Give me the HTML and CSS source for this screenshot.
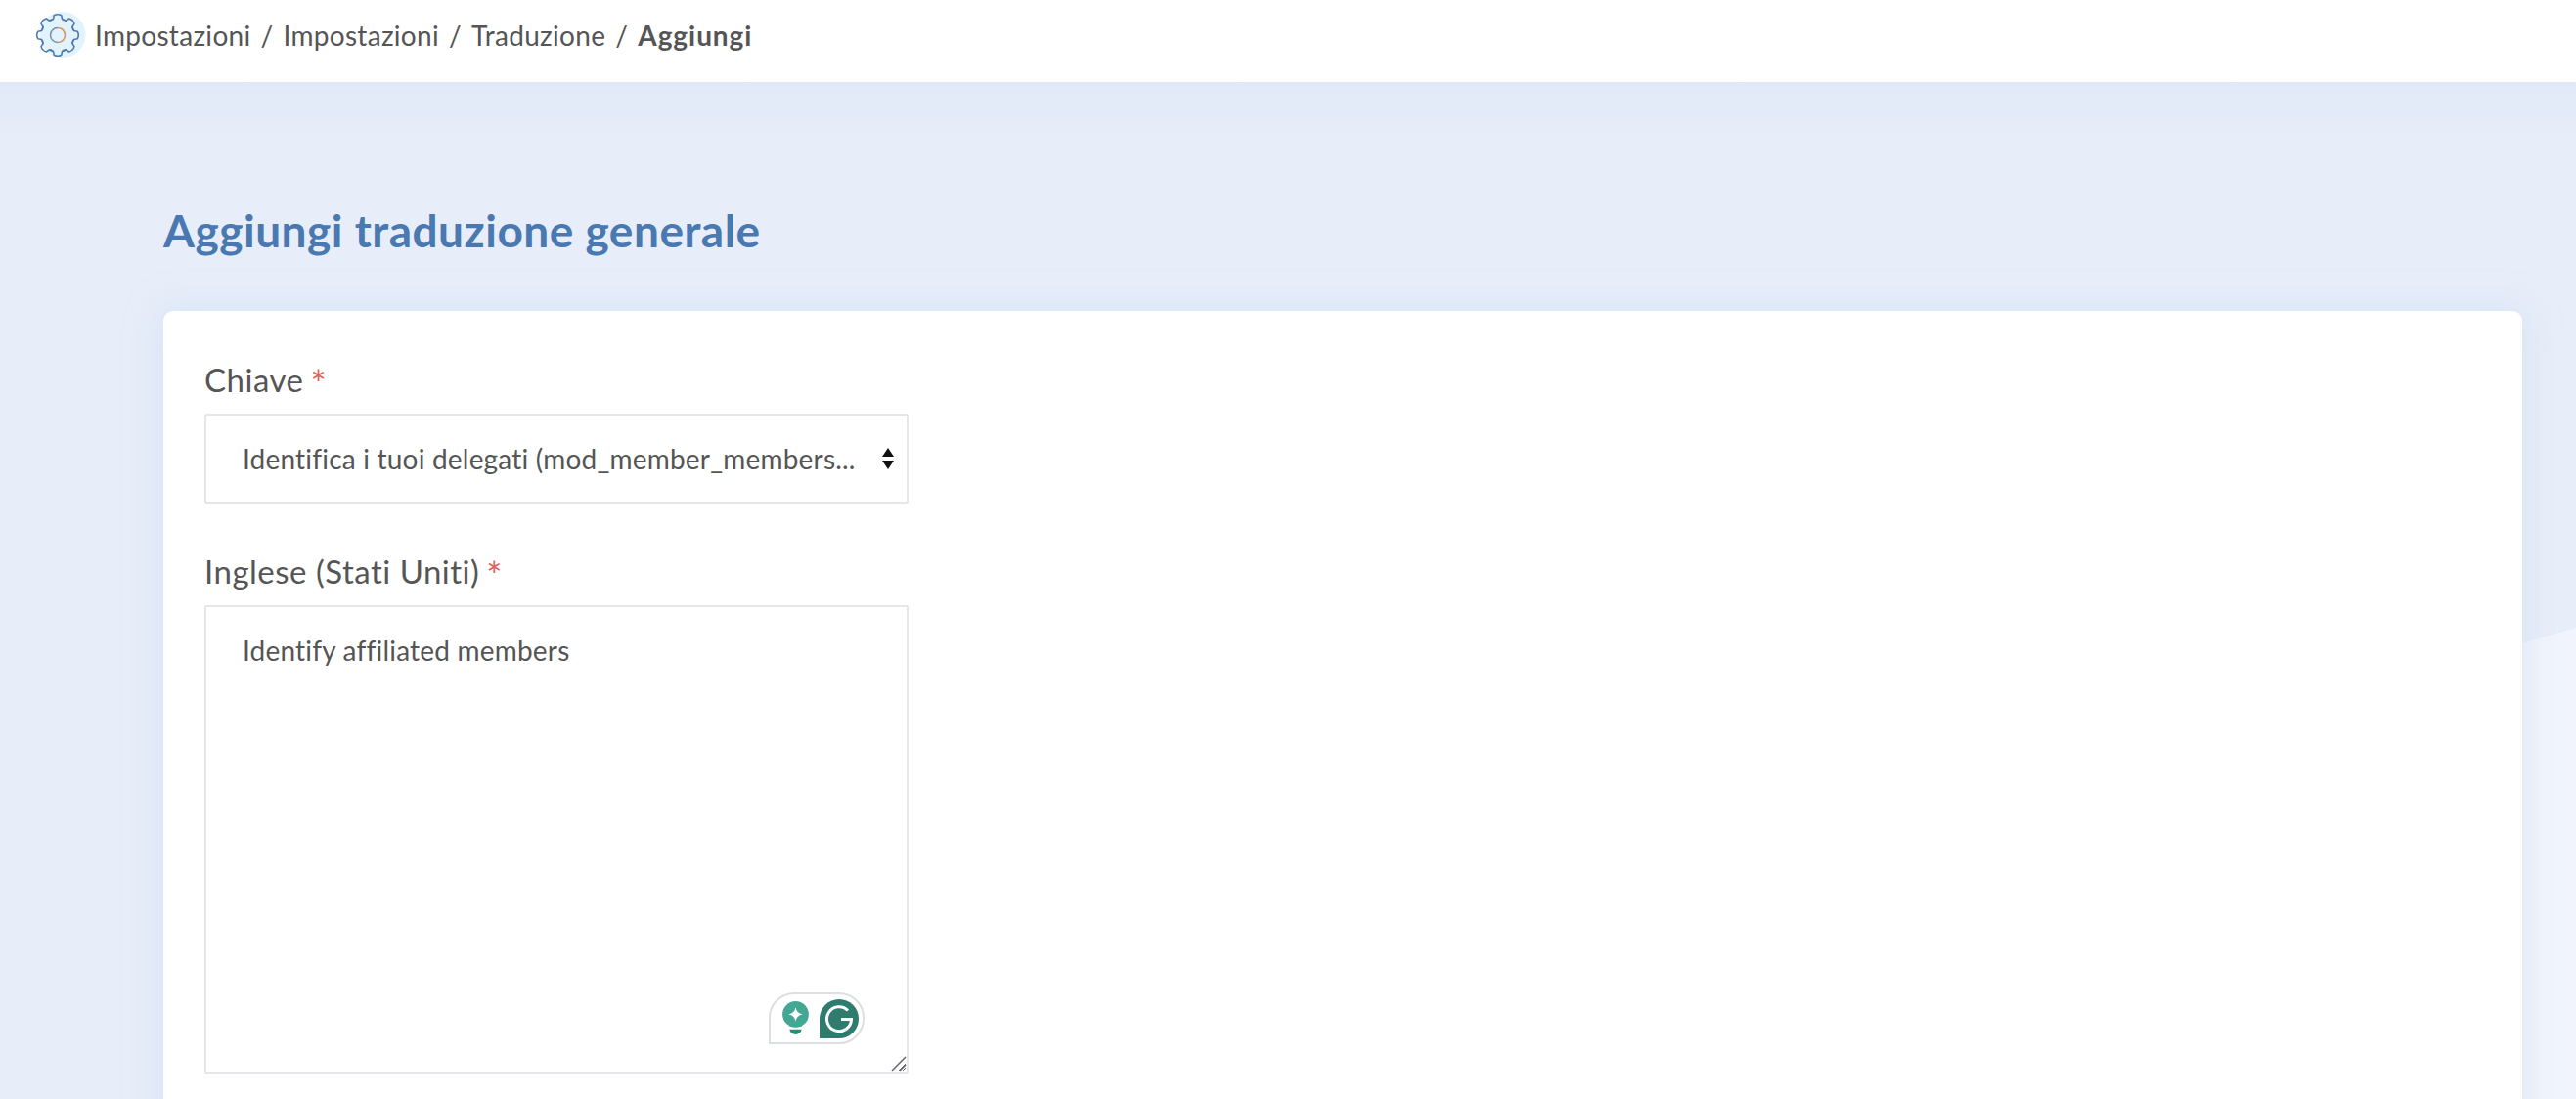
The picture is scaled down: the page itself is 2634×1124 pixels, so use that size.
FILE: index.html
```html
<!DOCTYPE html>
<html lang="it">
<head>
<meta charset="utf-8">
<title>Aggiungi traduzione generale</title>
<link rel="stylesheet" href="styles.css">
</head>
<body>
<header class="topbar">
  <svg class="gear" viewBox="0 0 54 48" width="54" height="48" aria-hidden="true">
    <circle cx="29" cy="23.500" r="23.500" fill="#e2f3fb"/>
    <defs><path id="sector" d="M15.900 8.900 Q18 8.600 19.500 7.400 L20.200 3.800 Q24 1.600 27.800 3.800 L28.500 7.400 Q30 8.600 32.100 8.900"/></defs>
    <g fill="none" stroke="#4b7bb0" stroke-width="1.600" stroke-linejoin="round" stroke-linecap="round">
      <use href="#sector"/>
      <use href="#sector" transform="rotate(45 24 24)"/>
      <use href="#sector" transform="rotate(90 24 24)"/>
      <use href="#sector" transform="rotate(135 24 24)"/>
      <use href="#sector" transform="rotate(180 24 24)"/>
      <use href="#sector" transform="rotate(225 24 24)"/>
      <use href="#sector" transform="rotate(270 24 24)"/>
      <use href="#sector" transform="rotate(315 24 24)"/>
    </g>
    <path d="M24 31.500 A7.500 7.500 0 0 1 24 16.500" fill="none" stroke="#6f8fb5" stroke-width="1.500"/>
    <path d="M24 16.500 A7.500 7.500 0 0 1 24 31.500" fill="none" stroke="#d99a66" stroke-width="1.700"/>
  </svg>
  <nav class="crumbs">
    <span>Impostazioni</span><span class="sep">/</span><span>Impostazioni</span><span class="sep">/</span><span>Traduzione</span><span class="sep">/</span><strong>Aggiungi</strong>
  </nav>
</header>
<main class="content">
  <h1 class="title">Aggiungi traduzione generale</h1>
  <section class="card">
    <div class="field">
      <label class="label" for="key">Chiave<span class="req">*</span></label>
      <div class="select-wrap">
        <select id="key" class="select"><option>Identifica i tuoi delegati (mod_member_members...</option></select>
        <svg class="arrows" viewBox="0 0 14 24" width="14" height="24" aria-hidden="true"><path d="M7 1 L13 10 H1 Z M1 14 H13 L7 23 Z" fill="#111"/></svg>
      </div>
    </div>
    <div class="field">
      <label class="label" for="en">Inglese (Stati Uniti)<span class="req">*</span></label>
      <div class="area-wrap">
        <textarea id="en" class="area">Identify affiliated members</textarea>
        <div class="grammarly" aria-hidden="true">
          <svg viewBox="0 0 28 34" width="29" height="35">
            <circle cx="14" cy="13" r="13" fill="#43a893"/>
            <path d="M8 22 H20 V25 H8 Z" fill="#43a893"/>
            <path d="M8 28 H20 Q19 33 14 33 Q9 33 8 28 Z" fill="#2f8a78"/>
            <path d="M14 6 Q15 12 21 13 Q15 14 14 20 Q13 14 7 13 Q13 12 14 6 Z" fill="#fff"/>
          </svg>
          <svg viewBox="0 0 40 40" width="40" height="40">
            <path d="M0 20 A20 20 0 1 1 20 40 H0 Z" fill="#2f7c6e"/>
            <path d="M29 11.500 A12.500 12.500 0 1 0 32.500 20.500 H22" fill="none" stroke="#fff" stroke-width="3"/>
          </svg>
        </div>
        <svg class="grip" viewBox="0 0 16 16" width="16" height="16" aria-hidden="true">
          <path d="M1 15 L15 1 M9 15 L15 9" stroke="#666" stroke-width="1.500" fill="none"/>
        </svg>
      </div>
    </div>
  </section>
</main>
</body>
</html>
```
FILE: styles.css
```css
* { box-sizing: border-box; }
html, body { height: 100%; }
body {
  margin: 0;
  height: 1124px;
  overflow: hidden;
  font-family: "Lato", "Open Sans", sans-serif;
  color: #555;
  background-color: #e7eef9;
  background-image:
    linear-gradient(to bottom right, transparent 50%, #f1f4fc 50%),
    linear-gradient(to bottom, #e1e8f7 0, #e7eef9 60px);
  background-repeat: no-repeat;
  background-size: 2634px 766px, 100% 200px;
  background-position: 0 642px, 0 84px;
}
.topbar {
  height: 84px;
  background: #fff;
  display: flex;
  align-items: center;
  padding: 0 0 12px 35px;
  gap: 8px;
}
.gear { flex: none; }
.crumbs {
  display: flex;
  align-items: center;
  font-size: 28px;
  letter-spacing: .3px;
  color: #555;
}
.crumbs strong { font-weight: 700; letter-spacing: .95px; }
.sep { margin: 0 10px; }
.content { padding: 0 55px 0 167px; }
.title {
  margin: 0;
  padding-top: 122px;
  height: 234px;
  font-size: 46px;
  line-height: 60px;
  font-weight: 700;
  color: #4a78b0;
  letter-spacing: .5px;
}
.card {
  background: #fff;
  border-radius: 10px;
  padding: 47px 42px 60px;
  height: 900px;
  box-shadow: 0 0 36px rgba(200, 214, 245, .5);
  display: flex;
  flex-direction: column;
  gap: 46px;
}
.field { width: 720px; }
.label {
  display: block;
  height: 58px;
  padding-top: 2px;
  font-size: 33px;
  line-height: 42px;
  letter-spacing: .5px;
  color: #555;
}
.req {
  color: #d9655c;
  margin-left: 7px;
  font-size: 38px;
  line-height: 30px;
  vertical-align: -6px;
}
.select-wrap { position: relative; }
.select {
  display: block;
  width: 100%;
  height: 92px;
  appearance: none;
  border: 2px solid #e4e6ea;
  border-radius: 2px;
  background: #fff;
  padding: 0 36px 0 37px;
  font: inherit;
  font-size: 28px;
  letter-spacing: .2px;
  color: #555;
  outline: none;
}
.arrows { position: absolute; right: 14px; top: 34px; }
.area-wrap { position: relative; }
.area {
  display: block;
  width: 100%;
  height: 479px;
  border: 2px solid #e4e6ea;
  border-radius: 2px;
  background: #fff;
  padding: 24px 37px;
  font: inherit;
  font-size: 28px;
  line-height: 40px;
  letter-spacing: .2px;
  color: #555;
  resize: both;
  outline: none;
}
.grammarly {
  position: absolute;
  left: 577px;
  top: 396px;
  width: 98px;
  height: 53px;
  display: flex;
  align-items: center;
  gap: 10px;
  padding-left: 11px;
  background: #fff;
  border: 2px solid #dcdfe4;
  border-radius: 26px 26px 26px 0;
}
.grip {
  position: absolute;
  right: 2px;
  bottom: 2px;
  pointer-events: none;
}
```
